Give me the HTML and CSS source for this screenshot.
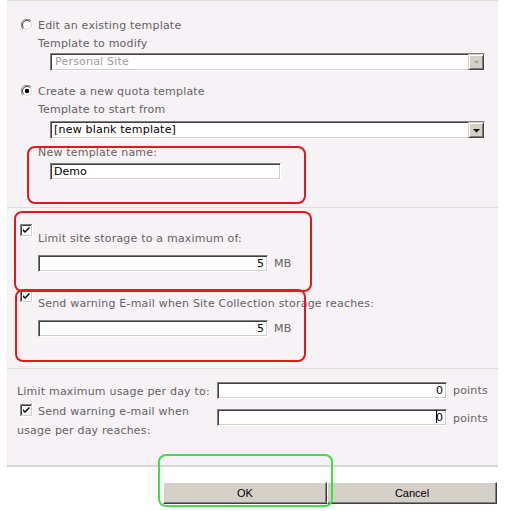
FILE: index.html
```html
<!DOCTYPE html>
<html>
<head>
<meta charset="utf-8">
<title>Quota template</title>
<link rel="stylesheet" href="styles.css">
</head>
<body>
<div class="page">
  <div class="panel">
    <section class="sec sec-template">
      <div class="line radio-line">
        <svg class="radio" width="12" height="12" viewBox="0 0 12 12">
          <circle cx="6" cy="6" r="5.5" fill="#fff"/>
          <path d="M10.1 1.9 A5.5 5.5 0 0 0 1.9 10.1" stroke="#808080" fill="none"/>
          <path d="M1.9 10.1 A5.5 5.5 0 0 0 10.1 1.9" stroke="#ffffff" fill="none"/>
          <path d="M9.2 2.8 A4.5 4.5 0 0 0 2.8 9.2" stroke="#404040" fill="none"/>
          <path d="M2.8 9.2 A4.5 4.5 0 0 0 9.2 2.8" stroke="#d4d0c8" fill="none"/>
        </svg>
        <span>Edit an existing template</span>
      </div>
      <div class="line indent">Template to modify</div>
      <div class="select disabled">
        <span class="select-text">Personal Site</span>
        <span class="dd"><svg width="7" height="4" viewBox="0 0 7 4"><path d="M1 0 H6 L3.5 2.5 Z" fill="#9a9a9a"/></svg></span>
      </div>
      <div class="line radio-line second">
        <svg class="radio" width="12" height="12" viewBox="0 0 12 12">
          <circle cx="6" cy="6" r="5.5" fill="#fff"/>
          <path d="M10.1 1.9 A5.5 5.5 0 0 0 1.9 10.1" stroke="#808080" fill="none"/>
          <path d="M1.9 10.1 A5.5 5.5 0 0 0 10.1 1.9" stroke="#ffffff" fill="none"/>
          <path d="M9.2 2.8 A4.5 4.5 0 0 0 2.8 9.2" stroke="#404040" fill="none"/>
          <path d="M2.8 9.2 A4.5 4.5 0 0 0 9.2 2.8" stroke="#d4d0c8" fill="none"/>
          <circle cx="6" cy="6" r="2.2" fill="#000"/>
        </svg>
        <span>Create a new quota template</span>
      </div>
      <div class="line indent">Template to start from</div>
      <div class="select start-select">
        <span class="select-text">[new blank template]</span>
        <span class="dd"><svg width="7" height="4" viewBox="0 0 7 4"><path d="M0 0 H7 L3.5 3.5 Z" fill="#000"/></svg></span>
      </div>
      <div class="line indent name-label">New template name:</div>
      <div class="field name-field">Demo</div>
    </section>

    <section class="sec sec-storage">
      <svg class="check first" width="13" height="13" viewBox="0 0 13 13">
        <rect width="13" height="13" fill="#fff"/>
        <path d="M0.5 12 V0.5 H12" stroke="#808080" fill="none"/>
        <path d="M1.5 11 V1.5 H11" stroke="#404040" fill="none"/>
        <path d="M0 12.5 H12.5 V0" stroke="#fff" fill="none"/>
        <path d="M1 11.5 H11.5 V1" stroke="#d4d0c8" fill="none"/>
        <path d="M3 5 L5 7 L9.5 2.5 L9.5 4.5 L5 9 L3 7 Z" fill="#000"/>
      </svg>
      <div class="line indent cb-label">Limit site storage to a maximum of:</div>
      <div class="field-row">
        <div class="field num">5</div>
        <span class="unit">MB</span>
      </div>
      <svg class="check second" width="13" height="13" viewBox="0 0 13 13">
        <rect width="13" height="13" fill="#fff"/>
        <path d="M0.5 12 V0.5 H12" stroke="#808080" fill="none"/>
        <path d="M1.5 11 V1.5 H11" stroke="#404040" fill="none"/>
        <path d="M0 12.5 H12.5 V0" stroke="#fff" fill="none"/>
        <path d="M1 11.5 H11.5 V1" stroke="#d4d0c8" fill="none"/>
        <path d="M3 5 L5 7 L9.5 2.5 L9.5 4.5 L5 9 L3 7 Z" fill="#000"/>
      </svg>
      <div class="line indent cb-label second-label">Send warning E-mail when Site Collection storage reaches:</div>
      <div class="field-row">
        <div class="field num">5</div>
        <span class="unit">MB</span>
      </div>
    </section>

    <section class="sec sec-usage">
      <div class="usage-label first-row">Limit maximum usage per day to:</div>
      <div class="field num">0</div>
      <span class="unit first-row">points</span>

      <div class="usage-label">
        <svg class="check inline" width="13" height="13" viewBox="0 0 13 13">
          <rect width="13" height="13" fill="#fff"/>
          <path d="M0.5 12 V0.5 H12" stroke="#808080" fill="none"/>
          <path d="M1.5 11 V1.5 H11" stroke="#404040" fill="none"/>
          <path d="M0 12.5 H12.5 V0" stroke="#fff" fill="none"/>
          <path d="M1 11.5 H11.5 V1" stroke="#d4d0c8" fill="none"/>
          <path d="M3 5 L5 7 L9.5 2.5 L9.5 4.5 L5 9 L3 7 Z" fill="#000"/>
        </svg>Send warning e-mail when<br>usage per day reaches:
      </div>
      <div class="field num second-row"><span class="caret"></span>0</div>
      <span class="unit second-row">points</span>
    </section>
  </div>

  <div class="buttons">
    <button class="btn ok" type="button">OK</button>
    <button class="btn cancel" type="button">Cancel</button>
  </div>

  <div class="mark red r1"></div>
  <div class="mark red r2"></div>
  <div class="mark red r3"></div>
  <div class="mark green g1"></div>
</div>
</body>
</html>
```

FILE: styles.css
```css
html, body {
  margin: 0;
  padding: 0;
  background: #ffffff;
}

body {
  font-family: "DejaVu Sans", Verdana, sans-serif;
  font-size: 11px;
  color: #636363;
}

.page {
  position: relative;
  width: 505px;
  height: 511px;
  overflow: hidden;
}

.panel {
  margin-left: 7px;
  width: 491px;
  background: #f6f2f5;
  border-top: 1px solid #dcdcdc;
  border-bottom: 2px solid #d6d6d6;
}

.sec {
  border-bottom: 1px solid #dcdcdc;
}

.sec-usage {
  border-bottom: none;
}

.line {
  height: 18px;
  line-height: 18px;
  white-space: nowrap;
  letter-spacing: 0.2px;
}

.indent {
  padding-left: 31px;
}

/* section 1 */
.sec-template {
  padding-top: 16px;
  padding-bottom: 27px;
}

.radio-line {
  display: flex;
  align-items: center;
  padding-left: 14px;
}

.radio-line .radio {
  flex: none;
  margin-right: 5px;
  margin-top: -3px;
}

.radio-line.second {
  margin-top: 12px;
}

.select {
  box-sizing: border-box;
  display: flex;
  align-items: center;
  margin-left: 43px;
  width: 435px;
  height: 18px;
  background: #ffffff;
  border: 1px solid;
  border-color: #808080 #ffffff #ffffff #808080;
  box-shadow: inset 1px 1px #404040, inset -1px -1px #d4d0c8;
  color: #000000;
}

.start-select {
  margin-top: 2px;
}

.select-text {
  flex: 1;
  padding-left: 3px;
  line-height: 16px;
  white-space: nowrap;
  letter-spacing: 0.2px;
}

.select.disabled .select-text {
  color: #a0a0a0;
  padding-left: 4px;
}

.dd {
  flex: none;
  box-sizing: border-box;
  width: 16px;
  height: 16px;
  align-self: flex-start;
  display: flex;
  align-items: center;
  justify-content: center;
  background: #d4d0c8;
  border: 1px solid;
  border-color: #d4d0c8 #404040 #404040 #d4d0c8;
  box-shadow: inset 1px 1px #ffffff, inset -1px -1px #808080;
}

.dd svg {
  display: block;
  margin-top: 1px;
}

.name-label {
  margin-top: 5px;
}

.field {
  box-sizing: border-box;
  height: 17px;
  line-height: 15px;
  background: #ffffff;
  border: 1px solid;
  border-color: #808080 #ffffff #ffffff #808080;
  box-shadow: inset 1px 1px #404040, inset -1px -1px #d4d0c8;
  color: #000000;
  padding: 0 3px;
  white-space: nowrap;
}

.name-field {
  margin-top: 1px;
  margin-left: 43px;
  width: 231px;
}

.num {
  text-align: right;
}

/* section 2 */
.sec-storage {
  padding-top: 16px;
  padding-bottom: 31px;
}

.check {
  display: block;
  margin-left: 13px;
}

.check.second {
  margin-top: 18px;
}

.cb-label {
  margin-top: -7px;
}

.cb-label.second-label {
  margin-top: -8px;
}

.field-row {
  display: flex;
  align-items: center;
  gap: 6px;
  margin-top: 7px;
  padding-left: 31px;
}

.field-row .field {
  width: 230px;
}

.unit {
  line-height: 17px;
  letter-spacing: 0.2px;
}

/* section 3 */
.sec-usage {
  display: grid;
  grid-template-columns: 200px 230px auto;
  column-gap: 0;
  row-gap: 1px;
  align-items: start;
  padding: 13px 0 25px 10px;
}

.usage-label {
  line-height: 19px;
  white-space: nowrap;
  letter-spacing: 0.2px;
}

.usage-label.first-row {
  margin-top: 0;
}

.sec-usage .unit {
  line-height: 19px;
  margin-top: -1px;
  margin-left: 6px;
}

.sec-usage .second-row {
  margin-top: 7px;
}

.sec-usage .unit.second-row {
  margin-top: 7px;
}

.check.inline {
  display: inline-block;
  vertical-align: -2px;
  margin: 0 5px 0 3px;
}

.caret {
  display: inline-block;
  width: 1px;
  height: 13px;
  background: #000000;
  vertical-align: -2px;
  margin-right: -1px;
}

/* buttons */
.buttons {
  display: flex;
  margin-top: 15px;
  margin-left: 163px;
}

.btn {
  box-sizing: border-box;
  height: 22px;
  padding: 0;
  font-family: "Liberation Sans", Tahoma, sans-serif;
  font-size: 11px;
  color: #000000;
  background: #d4d0c8;
  border: 1px solid;
  border-color: #ffffff #404040 #404040 #ffffff;
  box-shadow: inset -1px -1px #808080;
}

.btn.ok {
  width: 164px;
}

.btn.cancel {
  width: 170px;
}

/* annotation overlays */
.mark {
  position: absolute;
  box-sizing: border-box;
  border: 2px solid;
  border-radius: 8px;
  pointer-events: none;
}

.red {
  border-color: #e01a1a;
}

.green {
  border-color: #3fe03f;
}

.r1 {
  left: 27px;
  top: 146px;
  width: 279px;
  height: 58px;
}

.r2 {
  left: 14px;
  top: 211px;
  width: 298px;
  height: 81px;
}

.r3 {
  left: 15px;
  top: 289px;
  width: 291px;
  height: 73px;
}

.g1 {
  left: 158px;
  top: 454px;
  width: 175px;
  height: 53px;
}
```
